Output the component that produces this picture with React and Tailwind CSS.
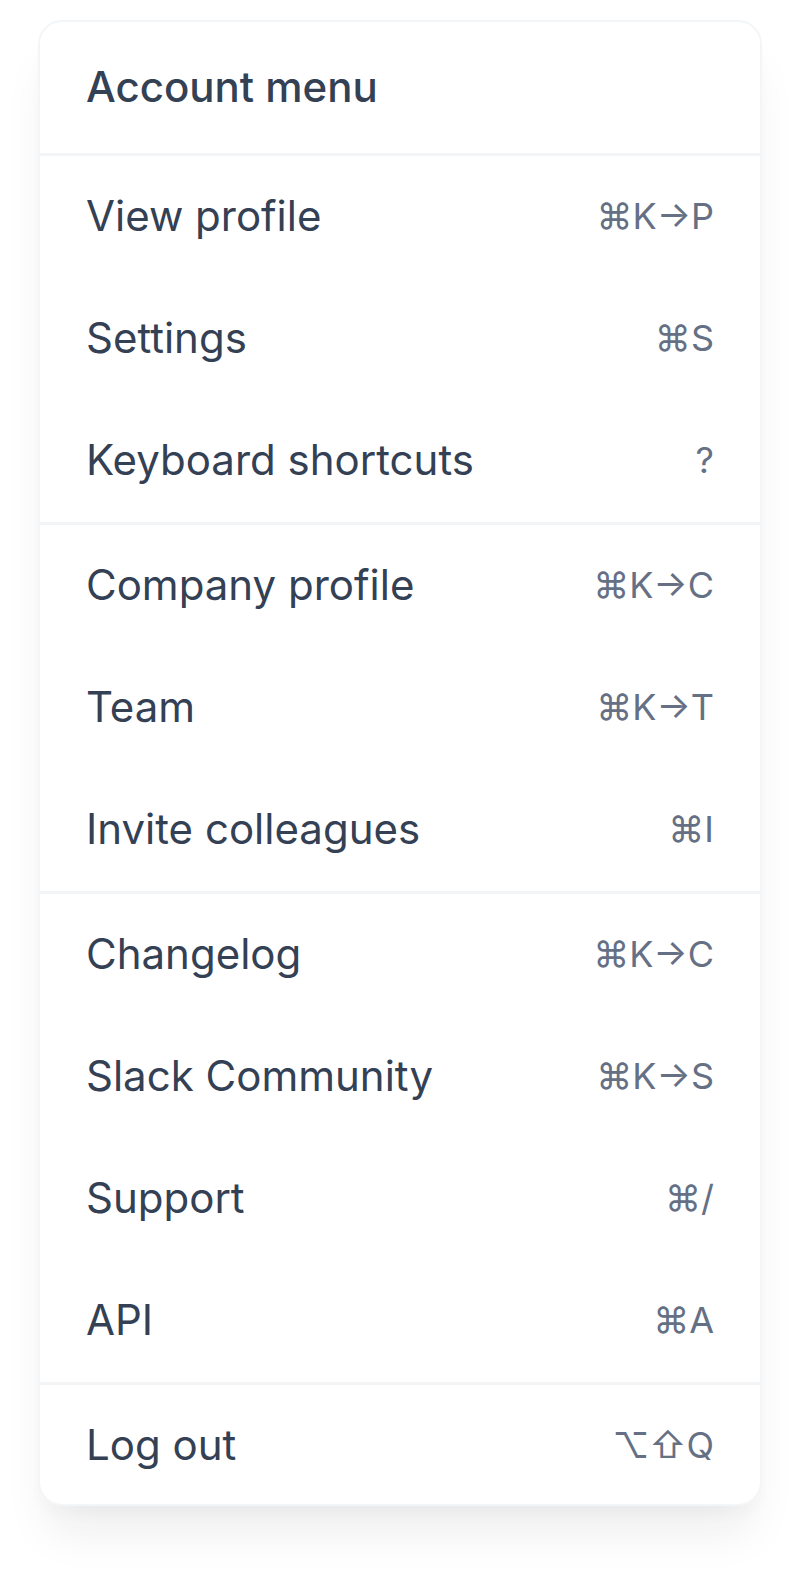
const sections = [
  [
    { label: "View profile", keys: "⌘K→P" },
    { label: "Settings", keys: "⌘S" },
    { label: "Keyboard shortcuts", keys: "?" },
  ],
  [
    { label: "Company profile", keys: "⌘K→C" },
    { label: "Team", keys: "⌘K→T" },
    { label: "Invite colleagues", keys: "⌘I" },
  ],
  [
    { label: "Changelog", keys: "⌘K→C" },
    { label: "Slack Community", keys: "⌘K→S" },
    { label: "Support", keys: "⌘/" },
    { label: "API", keys: "⌘A" },
  ],
  [{ label: "Log out", keys: "⌥⇧Q" }],
];

const App = () => {
  return (
    <main className="min-h-screen bg-white px-[38px] pt-5 pb-[72px] font-['Inter',sans-serif] text-[#344054]">
      <nav
        aria-label="Account menu"
        className="overflow-hidden rounded-3xl border-2 border-[#f3f6f9] bg-white shadow-[0_36px_48px_-12px_rgba(20,22,26,0.08),0_12px_18px_-6px_rgba(20,22,26,0.03)]"
      >
        <h1 className="px-[46px] pt-[35px] pb-9 text-[42px] leading-[60px] font-medium">
          Account menu
        </h1>

        {sections.map((items) => (
          <ul
            key={items[0].label}
            className="border-t-3 border-[#f2f4f6] last:-mb-[3px]"
          >
            {items.map((item) => (
              <li key={item.label}>
                <button
                  type="button"
                  className="flex w-full cursor-pointer items-center justify-between px-[46px] pt-[30px] pb-8 text-left text-[42px] leading-[60px] hover:bg-gray-50"
                >
                  <span>{item.label}</span>
                  <kbd className="font-['Inter',sans-serif] text-[36px] text-[#667085]">
                    {item.keys}
                  </kbd>
                </button>
              </li>
            ))}
          </ul>
        ))}
      </nav>
    </main>
  );
};

export default App;
